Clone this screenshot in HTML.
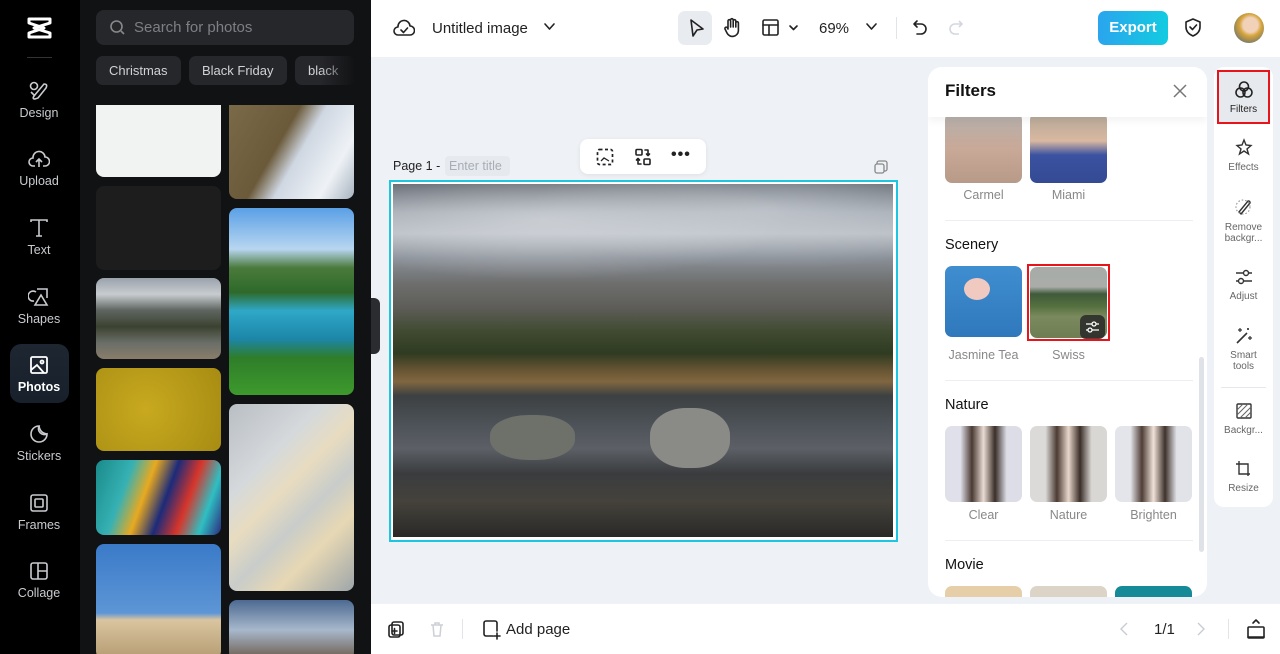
<!DOCTYPE html>
<html style="width:1280px;height:654px;overflow:hidden"><head><meta charset="utf-8"><style>
*{box-sizing:border-box;margin:0;padding:0}
body{width:1280px;height:654px;overflow:hidden;font-family:"Liberation Sans",sans-serif;background:#eef1f5;position:relative}
.abs{position:absolute}
.nav{left:0;top:0;width:80px;height:654px;background:#000}
.ni{position:absolute;left:0;width:78px;text-align:center;color:#c9cbcf;font-size:12.5px}
.ni svg{display:block;margin:0 auto 4px}
.panel{left:80px;top:0;width:291px;height:654px;background:#111214}
.img{position:absolute;border-radius:8px;overflow:hidden}
.chip{position:absolute;top:56px;height:29px;background:#26272b;color:#d0d2d6;font-size:13px;line-height:29px;padding:0 13px;border-radius:7px}
.ic{stroke:#222;fill:none;stroke-width:1.6;stroke-linecap:round;stroke-linejoin:round}
.rs{position:absolute;left:0;width:59px;text-align:center;font-size:10px;color:#666;line-height:11px}
.rs svg{display:block;margin:0 auto 3px}
.th{position:absolute;width:77px;height:71px;border-radius:7px;overflow:hidden}
.lb{position:absolute;width:77px;text-align:center;font-size:12.5px;color:#888}
.sec{position:absolute;left:17px;font-size:14.5px;color:#111;font-weight:500}
</style></head><body>
<div class="abs nav">
 <svg class="abs" style="left:26px;top:16px" width="27" height="23" viewBox="0 0 27 23"><path d="M3 3 L24 3 L24 7 L8 12 L24 17 L24 21 L3 21 L3 17 L18 12 L3 7 Z" fill="none" stroke="#fff" stroke-width="3" stroke-linejoin="round"/></svg>
 <div class="abs" style="left:27px;top:57px;width:25px;height:1px;background:#333"></div>
 <div class="ni" style="top:80px"><svg width="22" height="22" viewBox="0 0 22 22" fill="none" stroke="#c9cbcf" stroke-width="1.6"><circle cx="6" cy="6" r="3.5"/><path d="M10 18 L18 8 Q20 4 16 4 L6 16 Q4 19 7 19 Z"/><path d="M3 12 L7 16"/></svg>Design</div>
 <div class="ni" style="top:148px"><svg width="22" height="22" viewBox="0 0 22 22" fill="none" stroke="#c9cbcf" stroke-width="1.6"><path d="M7 18 H5 A4 4 0 0 1 5 10 A6 6 0 0 1 17 9 A4 4 0 0 1 17 18 H15"/><path d="M11 19 V11 M8 14 L11 11 L14 14"/></svg>Upload</div>
 <div class="ni" style="top:217px"><svg width="22" height="22" viewBox="0 0 22 22" fill="none" stroke="#c9cbcf" stroke-width="1.6"><path d="M3 5 V3 H19 V5 M11 3 V19 M8 19 H14"/></svg>Text</div>
 <div class="ni" style="top:286px"><svg width="22" height="22" viewBox="0 0 22 22" fill="none" stroke="#c9cbcf" stroke-width="1.6"><path d="M8 6 A5 5 0 1 0 6 15"/><path d="M9 3 H19 V12"/><path d="M13 9 L19 19 H7 Z"/></svg>Shapes</div>
 <div class="abs" style="left:10px;top:344px;width:59px;height:59px;border-radius:11px;background:linear-gradient(#1e2631,#17202b)"></div>
 <div class="ni" style="top:354px;color:#fff;font-weight:bold"><svg width="22" height="22" viewBox="0 0 22 22" fill="none" stroke="#fff" stroke-width="1.8"><rect x="3" y="3" width="16" height="16" rx="1.5"/><circle cx="14" cy="8" r="1.5"/><path d="M3 16 L9 11 L16 19"/></svg>Photos</div>
 <div class="ni" style="top:423px"><svg width="22" height="22" viewBox="0 0 22 22" fill="none" stroke="#c9cbcf" stroke-width="1.6"><path d="M19 11 A8 8 0 1 1 11 3 A6 6 0 0 0 19 11 Z"/><path d="M11 3 Q12 10 19 11"/></svg>Stickers</div>
 <div class="ni" style="top:492px"><svg width="22" height="22" viewBox="0 0 22 22" fill="none" stroke="#c9cbcf" stroke-width="1.6"><rect x="3" y="3" width="16" height="16" rx="2"/><rect x="7" y="7" width="8" height="8" rx="1"/></svg>Frames</div>
 <div class="ni" style="top:560px"><svg width="22" height="22" viewBox="0 0 22 22" fill="none" stroke="#c9cbcf" stroke-width="1.6"><rect x="3" y="3" width="16" height="16" rx="2"/><path d="M10 3 V19 M10 11 H19"/></svg>Collage</div>
</div>
<div class="abs panel">
 <div class="abs" style="left:16px;top:10px;width:258px;height:35px;background:#26272b;border-radius:8px"></div>
 <svg class="abs" style="left:29px;top:19px" width="17" height="17" viewBox="0 0 17 17" fill="none" stroke="#888" stroke-width="1.6"><circle cx="7.5" cy="7.5" r="5.5"/><path d="M12 12 L15 15"/></svg>
 <div class="abs" style="left:54px;top:19px;color:#7d7f85;font-size:15px">Search for photos</div>
 <div class="chip" style="left:16px">Christmas</div>
 <div class="chip" style="left:109px">Black Friday</div>
 <div class="chip" style="left:215px;width:60px">black</div>
 <div class="abs" style="left:240px;top:50px;width:51px;height:40px;background:linear-gradient(90deg,rgba(17,18,20,0),#111214 70%)"></div>
 <div class="img" style="left:16px;top:105px;width:125px;height:72px;background:#f1f2f2;border-radius:0 0 8px 8px"></div>
 <div class="img" style="left:16px;top:186px;width:125px;height:84px;background:#1d1d1d"></div>
 <div class="img" style="left:16px;top:278px;width:125px;height:81px;background:linear-gradient(#9aa2ab 0%,#c8ccd0 20%,#5e6560 40%,#3c4230 60%,#6a6e68 80%,#8a7d6a)"></div>
 <div class="img" style="left:16px;top:368px;width:125px;height:83px;background:radial-gradient(circle at 40% 50%,#c8a91f,#a78c12)"></div>
 <div class="img" style="left:16px;top:460px;width:125px;height:75px;background:linear-gradient(110deg,#1a8a8a 0%,#36b1b4 25%,#e8a920 40%,#1c2b7a 55%,#d7352a 70%,#2fbfc2 85%,#2b2b80)"></div>
 <div class="img" style="left:16px;top:544px;width:125px;height:115px;background:linear-gradient(#3a7ac8 0%,#5d96d6 60%,#d9c5a0 66%,#b59b72 100%)"></div>
 <div class="img" style="left:149px;top:105px;width:125px;height:94px;background:linear-gradient(120deg,#7a6a48 0%,#6b5a3a 40%,#cfd7e2 55%,#eef2f6 80%,#a8b4c0);border-radius:0 0 8px 8px"></div>
 <div class="img" style="left:149px;top:208px;width:125px;height:187px;background:linear-gradient(#5aa0e6 0%,#b8d6f0 22%,#4a7a3c 32%,#2e6a2a 45%,#2fa8c8 55%,#1c86a8 70%,#2f7d2a 80%,#3d9a2c)"></div>
 <div class="img" style="left:149px;top:404px;width:125px;height:187px;background:linear-gradient(135deg,#b9bec4,#d5d9dc 30%,#e8dcc0 45%,#c8ccca 60%,#e7d8b4 75%,#9ea6aa)"></div>
 <div class="img" style="left:149px;top:600px;width:125px;height:60px;background:linear-gradient(#4c6a92,#a8b8cc 50%,#6a5a4a)"></div>
</div>
<div class="abs" style="left:371px;top:298px;width:9px;height:56px;background:#2b2c30;border-radius:0 6px 6px 0"></div>
<div class="abs" style="left:371px;top:0;width:909px;height:57px;background:#fff"></div>
<svg class="abs" style="left:393px;top:17px" width="22" height="22" viewBox="0 0 22 22"><path class="ic" d="M6 18 H5 A4 4 0 0 1 5 10 A6 6 0 0 1 17 9 A4 4 0 0 1 17 18 Z"/><path class="ic" d="M8 13 L10.5 15.5 L14.5 11"/></svg>
<div class="abs" style="left:432px;top:20px;font-size:15px;color:#222">Untitled image</div>
<svg class="abs" style="left:543px;top:22px" width="13" height="10"><path class="ic" d="M2 2 L6.5 7 L11 2"/></svg>
<div class="abs" style="left:678px;top:11px;width:34px;height:34px;background:#e8ebef;border-radius:7px"></div>
<svg class="abs" style="left:685px;top:17px" width="22" height="22"><path class="ic" d="M6 3 L18 12 L12 13 L8 19 Z"/></svg>
<svg class="abs" style="left:721px;top:16px" width="22" height="24"><path class="ic" d="M7 13 V5 A1.3 1.3 0 0 1 9.6 5 V11 M9.6 4 A1.3 1.3 0 0 1 12.2 4 V11 M12.2 5 A1.3 1.3 0 0 1 14.8 5 V11 M14.8 7 A1.3 1.3 0 0 1 17.4 7 V15 A6 6 0 0 1 6 17 L4 13 A1.2 1.2 0 0 1 6.5 12 L7 13"/></svg>
<svg class="abs" style="left:761px;top:17px" width="40" height="22"><rect class="ic" x="2" y="3" width="15" height="15" rx="1.5"/><path class="ic" d="M2 8 H17 M8 8 V18 M29 9 L32.5 12.5 L36 9"/></svg>
<div class="abs" style="left:819px;top:20px;font-size:15px;color:#222">69%</div>
<svg class="abs" style="left:865px;top:22px" width="13" height="10"><path class="ic" d="M2 2 L6.5 7 L11 2"/></svg>
<div class="abs" style="left:896px;top:17px;width:1px;height:22px;background:#e2e4e8"></div>
<svg class="abs" style="left:910px;top:17px" width="20" height="22"><path class="ic" d="M7 4 L4 7 L7 10 M4 7 H11 A5 5 0 0 1 11 17 H7"/></svg>
<svg class="abs" style="left:946px;top:17px" width="20" height="22"><path d="M13 4 L16 7 L13 10 M16 7 H9 A5 5 0 0 0 9 17 H13" fill="none" stroke="#d4d8de" stroke-width="1.6"/></svg>
<div class="abs" style="left:1098px;top:11px;width:70px;height:34px;border-radius:7px;background:linear-gradient(90deg,#2aa5ee,#13cbe0);color:#fff;font-weight:bold;font-size:15px;text-align:center;line-height:34px">Export</div>
<svg class="abs" style="left:1182px;top:16px" width="22" height="24"><path class="ic" d="M11 3 L18 6 V11 Q18 17 11 20 Q4 17 4 11 V6 Z M8 11 L10.5 13.5 L14.5 9"/></svg>
<div class="abs" style="left:1234px;top:13px;width:30px;height:30px;border-radius:50%;background:radial-gradient(circle at 55% 40%,#f1d2b8 0 30%,#d6a43a 45%,#385b8a)"></div>
<div class="abs" style="left:393px;top:159px;font-size:12.5px;color:#222">Page 1 -</div>
<div class="abs" style="left:445px;top:156px;width:65px;height:20px;background:#e6e9ed;border-radius:4px;color:#a8adb5;font-size:12.5px;line-height:20px;padding-left:4px">Enter title</div>
<div class="abs" style="left:580px;top:139px;width:126px;height:35px;background:#fff;border-radius:8px;box-shadow:0 1px 5px rgba(0,0,0,.08)"></div>
<svg class="abs" style="left:595px;top:147px" width="20" height="20"><rect x="2.5" y="2.5" width="15" height="15" rx="2" fill="none" stroke="#222" stroke-width="1.7" stroke-dasharray="3 2.5"/><path d="M6 14 L9 11 L14 14" stroke="#222" fill="none" stroke-width="1.3"/></svg>
<svg class="abs" style="left:633px;top:147px" width="20" height="20"><rect class="ic" x="3" y="2.5" width="6" height="5.5" rx="1"/><rect class="ic" x="11" y="12" width="6" height="5.5" rx="1"/><path class="ic" d="M12 3 H15 V8 M13.5 7 L15 8.5 L16.5 7 M8 17 H5 V12 M3.5 13 L5 11.5 L6.5 13"/></svg>
<div class="abs" style="left:671px;top:146px;font-size:16px;font-weight:bold;color:#222;letter-spacing:1px">•••</div>
<svg class="abs" style="left:873px;top:159px" width="16" height="16"><rect x="4" y="2" width="10" height="10" rx="2" fill="none" stroke="#888" stroke-width="1.3"/><rect x="2" y="5" width="9" height="9" rx="2" fill="#eef1f5" stroke="#888" stroke-width="1.3"/></svg>
<div class="abs" style="left:389px;top:180px;width:509px;height:362px;border:2px solid #1ec5e0;background:#fff"></div>
<div class="abs" style="left:393px;top:184px;width:500px;height:353px;background:linear-gradient(180deg,#5f656d 0%,#a2a8b0 8%,#b9bec5 14%,#8a9098 21%,#6e6f6e 28%,#5e5d58 35%,#3f4a30 42%,#2f3b22 48%,#6a5634 53%,#806640 56%,#3c4042 60%,#4d5258 68%,#5c6066 75%,#3a3c3e 82%,#45423c 90%,#2a2926 100%)"></div>
<div class="abs" style="left:393px;top:184px;width:500px;height:120px;background:radial-gradient(ellipse at 30% 30%,rgba(225,228,232,.55),rgba(0,0,0,0) 50%),radial-gradient(ellipse at 75% 20%,rgba(215,220,226,.5),rgba(0,0,0,0) 45%)"></div>
<div class="abs" style="left:650px;top:408px;width:80px;height:60px;border-radius:45%;background:#8a8b86"></div>
<div class="abs" style="left:490px;top:415px;width:85px;height:45px;border-radius:45%;background:#6e706a"></div>
<div class="abs" style="left:371px;top:604px;width:909px;height:50px;background:#fff"></div>
<svg class="abs" style="left:386px;top:619px" width="20" height="20"><rect class="ic" x="6" y="3" width="11" height="13" rx="2"/><rect class="ic" x="3" y="6" width="11" height="12" rx="2" fill="#fff"/><path class="ic" d="M8.5 9.5 V14.5 M6 12 H11"/></svg>
<svg class="abs" style="left:428px;top:620px" width="18" height="18"><path d="M3 5 H15 M7 5 V3 H11 V5 M5 5 L6 16 H12 L13 5" fill="none" stroke="#ccd0d6" stroke-width="1.5"/></svg>
<div class="abs" style="left:462px;top:619px;width:1px;height:20px;background:#e2e4e8"></div>
<svg class="abs" style="left:481px;top:619px" width="22" height="22"><path class="ic" d="M12 17 H5 A2 2 0 0 1 3 15 V4 A2 2 0 0 1 5 2 H14 A2 2 0 0 1 16 4 V12 M16 14 V20 M13 17 H19"/></svg>
<div class="abs" style="left:506px;top:621px;font-size:15px;color:#222">Add page</div>
<svg class="abs" style="left:1118px;top:620px" width="12" height="18"><path d="M9 3 L3 9 L9 15" fill="none" stroke="#c8ccd2" stroke-width="1.4"/></svg>
<div class="abs" style="left:1154px;top:621px;font-size:15px;color:#222">1/1</div>
<svg class="abs" style="left:1195px;top:620px" width="12" height="18"><path d="M3 3 L9 9 L3 15" fill="none" stroke="#c8ccd2" stroke-width="1.4"/></svg>
<div class="abs" style="left:1228px;top:619px;width:1px;height:20px;background:#e2e4e8"></div>
<svg class="abs" style="left:1245px;top:617px" width="22" height="24"><path class="ic" d="M8 6 L11 3 L14 6"/><rect class="ic" x="3" y="10" width="16" height="11" rx="1"/><path class="ic" d="M3 20 H19"/></svg>
<div class="abs" style="left:928px;top:67px;width:279px;height:530px;background:#fff;border-radius:14px;overflow:hidden">
 <div class="th" style="left:17px;top:46px;height:70px;background:linear-gradient(#b4b0ac,#c9a998 50%,#b89a88)"></div>
 <div class="th" style="left:102px;top:46px;height:70px;background:linear-gradient(#b2a898 0%,#d9b8a0 40%,#3a52a0 60%,#344a94)"></div>
 <div class="lb" style="left:17px;top:121px">Carmel</div>
 <div class="lb" style="left:102px;top:121px">Miami</div>
 <div class="abs" style="left:17px;top:153px;width:248px;height:1px;background:#eceef1"></div>
 <div class="sec" style="top:170px">Scenery</div>
 <div class="th" style="left:17px;top:199px;background:linear-gradient(#3f8ed0,#2f78bc)"></div>
 <div class="abs" style="left:36px;top:211px;width:26px;height:22px;border-radius:50%;background:#f0c9c0"></div>
 <div class="abs" style="left:99px;top:197px;width:83px;height:77px;border:2px solid #e8141c"></div>
 <div class="th" style="left:102px;top:200px;height:71px;background:linear-gradient(#a8aba8 0%,#a9aca8 28%,#3f5a3a 38%,#55703f 55%,#7b8a5e 70%,#6e7e52)"></div>
 <div class="abs" style="left:152px;top:248px;width:25px;height:24px;background:rgba(40,40,40,.85);border-radius:6px"></div>
 <svg class="abs" style="left:155px;top:251px" width="19" height="18"><path d="M3 6 H16 M3 12 H16" stroke="#fff" stroke-width="1.3"/><circle cx="11" cy="6" r="2" fill="#333" stroke="#fff" stroke-width="1.3"/><circle cx="7" cy="12" r="2" fill="#333" stroke="#fff" stroke-width="1.3"/></svg>
 <div class="lb" style="left:17px;top:281px">Jasmine Tea</div>
 <div class="lb" style="left:102px;top:281px">Swiss</div>
 <div class="abs" style="left:17px;top:313px;width:248px;height:1px;background:#eceef1"></div>
 <div class="sec" style="top:330px">Nature</div>
 <div class="th" style="left:17px;top:359px;height:76px;background:linear-gradient(90deg,#dfe0ea 20%,#4a3a32 35%,#e8dcd4 50%,#3a2e28 65%,#dcdde6 80%);"></div>
 <div class="th" style="left:102px;top:359px;height:76px;background:linear-gradient(90deg,#dcdad8 20%,#4a3a32 35%,#e8d8cc 50%,#3a2e28 65%,#d9d7d4 80%)"></div>
 <div class="th" style="left:187px;top:359px;height:76px;background:linear-gradient(90deg,#e4e5ea 20%,#4e3e36 35%,#f0e2d8 50%,#3e322c 65%,#e2e3e8 80%)"></div>
 <div class="lb" style="left:17px;top:441px">Clear</div>
 <div class="lb" style="left:102px;top:441px">Nature</div>
 <div class="lb" style="left:187px;top:441px">Brighten</div>
 <div class="abs" style="left:17px;top:473px;width:248px;height:1px;background:#eceef1"></div>
 <div class="sec" style="top:490px">Movie</div>
 <div class="th" style="left:17px;top:519px;background:#e6cfa8"></div>
 <div class="th" style="left:102px;top:519px;background:#dcd4c6"></div>
 <div class="th" style="left:187px;top:519px;background:#178a98"></div>
 <div class="abs" style="left:271px;top:290px;width:5px;height:195px;background:#dfe2e6;border-radius:3px"></div>
 <div class="abs" style="left:0;top:0;width:279px;height:50px;background:#fff;box-shadow:0 4px 8px rgba(0,0,0,.05)"></div>
 <div class="abs" style="left:17px;top:14px;font-size:17px;font-weight:bold;color:#111">Filters</div>
 <svg class="abs" style="left:244px;top:16px" width="16" height="16"><path d="M2 2 L14 14 M14 2 L2 14" stroke="#777" stroke-width="1.5"/></svg>
</div>
<div class="abs" style="left:1214px;top:67px;width:59px;height:440px;background:#fff;border-radius:10px">
 <div class="abs" style="left:3px;top:3px;width:53px;height:54px;background:#e6e9ed;border:2px solid #e8141c"></div>
 <div class="rs" style="top:12px;color:#222"><svg width="22" height="22"><circle class="ic" cx="11" cy="7.5" r="4.5"/><circle class="ic" cx="7.5" cy="13.5" r="4.5"/><circle class="ic" cx="14.5" cy="13.5" r="4.5"/></svg>Filters</div>
 <div class="rs" style="top:70px"><svg width="22" height="22"><path d="M11 3 L13 8 L18 8.5 L14 12 L15.5 17 L11 14 L6.5 17 L8 12 L4 8.5 L9 8 Z" fill="none" stroke="#333" stroke-width="1.4"/></svg>Effects</div>
 <div class="rs" style="top:130px"><svg width="22" height="22"><path d="M8 17 L17 6 A1.6 1.6 0 0 0 15 4 L6 15 Z" fill="none" stroke="#333" stroke-width="1.4"/><circle cx="10" cy="10" r="7" fill="none" stroke="#888" stroke-width="1" stroke-dasharray="1.5 2"/></svg>Remove<br>backgr...</div>
 <div class="rs" style="top:199px"><svg width="22" height="22"><path d="M3 7 H19 M3 15 H19" stroke="#333" stroke-width="1.4"/><circle cx="13" cy="7" r="2.5" fill="#fff" stroke="#333" stroke-width="1.4"/><circle cx="8" cy="15" r="2.5" fill="#fff" stroke="#333" stroke-width="1.4"/></svg>Adjust</div>
 <div class="rs" style="top:258px"><svg width="22" height="22"><path d="M4 18 L14 8 M12 10 L14 8" stroke="#333" stroke-width="1.6"/><path d="M7 3 V7 M5 5 H9 M17 11 V15 M15 13 H19 M15 3 V5 M14 4 H16" stroke="#333" stroke-width="1.2"/></svg>Smart<br>tools</div>
 <div class="abs" style="left:7px;top:320px;width:45px;height:1px;background:#e6e8eb"></div>
 <div class="rs" style="top:333px"><svg width="22" height="22"><rect x="4" y="4" width="14" height="14" rx="1" fill="none" stroke="#333" stroke-width="1.4"/><path d="M4 10 L10 4 M4 15 L15 4 M7 18 L18 7 M12 18 L18 12" stroke="#666" stroke-width="1"/></svg>Backgr...</div>
 <div class="rs" style="top:391px"><svg width="22" height="22"><path d="M6 3 V16 H17 M3 6 H15 V18" fill="none" stroke="#333" stroke-width="1.4"/></svg>Resize</div>
</div>
</body></html>
